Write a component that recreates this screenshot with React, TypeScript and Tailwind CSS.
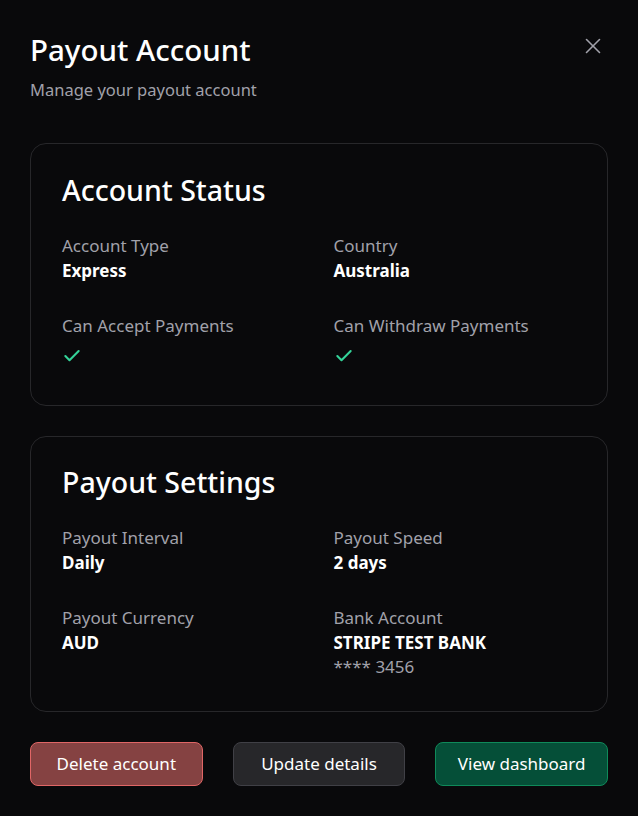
import { Check, X } from 'lucide-react';

const font = { fontFamily: '"Noto Sans", "Open Sans", sans-serif' };

function Field({ label, children }: { label: string; children: React.ReactNode }) {
  return (
    <div className="flex flex-col">
      <span className="text-[17px] leading-[25px] text-[#a1a1aa]">{label}</span>
      {children}
    </div>
  );
}

function Value({ children }: { children: React.ReactNode }) {
  return <span className="text-[17px] font-bold leading-[25px] text-white">{children}</span>;
}

function Card({ title, children, className }: { title: string; children: React.ReactNode; className: string }) {
  return (
    <section className={`rounded-2xl border border-[#27272a] bg-[#09090b] px-[31px] ${className}`}>
      <h2 className="text-[28.5px] font-medium leading-9 text-white">{title}</h2>
      <div className="mt-[25px] grid grid-cols-2 gap-x-[29px] gap-y-[30px]">{children}</div>
    </section>
  );
}

function Ok() {
  return (
    <span className="mt-[5px] flex h-[25px] items-center">
      <Check size={20} strokeWidth={2.5} className="text-[#34d399]" />
    </span>
  );
}

export default function App() {
  return (
    <div className="min-h-[816px] w-[638px] bg-[#09090b] px-[30px] pt-[32px]" style={font}>
      <header className="relative">
        <h1 className="text-[29.5px] font-medium leading-9 text-white">Payout Account</h1>
        <p className="mt-[10px] text-[16.5px] leading-6 text-[#a1a1aa]">Manage your payout account</p>
        <button className="absolute right-[2px] top-[1px] text-[#a1a1aa]" aria-label="Close">
          <X size={26} strokeWidth={1.5} />
        </button>
      </header>

      <div className="mt-[41px] flex flex-col gap-[30px]">
        <Card title="Account Status" className="pt-[28px] pb-[37px]">
          <Field label="Account Type">
            <Value>Express</Value>
          </Field>
          <Field label="Country">
            <Value>Australia</Value>
          </Field>
          <Field label="Can Accept Payments">
            <Ok />
          </Field>
          <Field label="Can Withdraw Payments">
            <Ok />
          </Field>
        </Card>

        <Card title="Payout Settings" className="pt-[27px] pb-[32px]">
          <Field label="Payout Interval">
            <Value>Daily</Value>
          </Field>
          <Field label="Payout Speed">
            <Value>2 days</Value>
          </Field>
          <Field label="Payout Currency">
            <Value>AUD</Value>
          </Field>
          <Field label="Bank Account">
            <Value>STRIPE TEST BANK</Value>
            <span className="text-[17px] leading-6 text-[#a1a1aa]">**** 3456</span>
          </Field>
        </Card>
      </div>

      <div className="mt-[30px] grid grid-cols-3 gap-[30px]">
        <button className="h-11 rounded-lg border border-[#e06666] bg-[#854242] text-[17px] text-white">
          Delete account
        </button>
        <button className="h-11 rounded-lg border border-[#404046] bg-[#27272a] text-[17px] text-white">
          Update details
        </button>
        <button className="h-11 rounded-lg border border-[#0f8a5a] bg-[#054f38] text-[17px] text-white">
          View dashboard
        </button>
      </div>
    </div>
  );
}
